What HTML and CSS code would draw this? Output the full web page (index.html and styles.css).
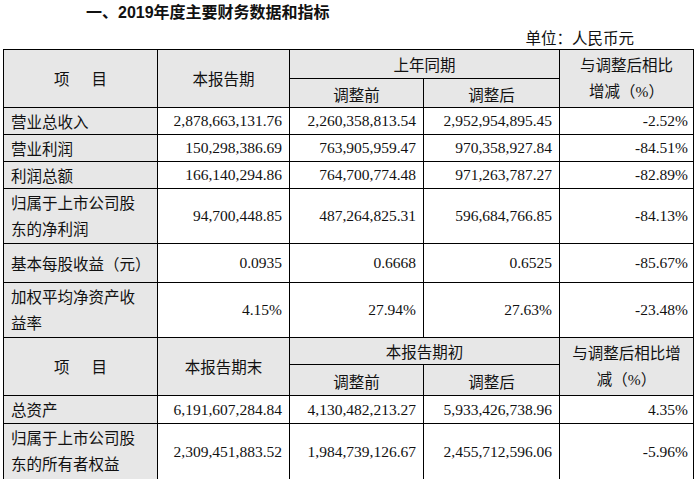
FILE: index.html
```html
<!DOCTYPE html>
<html lang="zh-CN">
<head>
<meta charset="utf-8">
<link rel="stylesheet" href="styles.css">
</head>
<body>
<h1 class="title">一、2019年度主要财务数据和指标</h1>
<div class="unit">单位：人民币元</div>
<table class="fin">
  <colgroup>
    <col class="c1"><col class="c2"><col class="c3"><col class="c4"><col class="c5">
  </colgroup>
  <tr class="h1">
    <td class="hd" rowspan="2">项<span class="sp"></span>目</td>
    <td class="hd" rowspan="2">本报告期</td>
    <td class="hd" colspan="2">上年同期</td>
    <td class="hd lh" rowspan="2">与调整后相比<br>增减（%）</td>
  </tr>
  <tr class="h2">
    <td class="hd sub">调整前</td>
    <td class="hd sub">调整后</td>
  </tr>
  <tr class="r1">
    <td class="lbl">营业总收入</td>
    <td class="num">2,878,663,131.76</td>
    <td class="num">2,260,358,813.54</td>
    <td class="num">2,952,954,895.45</td>
    <td class="pct">-2.52%</td>
  </tr>
  <tr class="r1">
    <td class="lbl">营业利润</td>
    <td class="num">150,298,386.69</td>
    <td class="num">763,905,959.47</td>
    <td class="num">970,358,927.84</td>
    <td class="pct">-84.51%</td>
  </tr>
  <tr class="r1">
    <td class="lbl">利润总额</td>
    <td class="num">166,140,294.86</td>
    <td class="num">764,700,774.48</td>
    <td class="num">971,263,787.27</td>
    <td class="pct">-82.89%</td>
  </tr>
  <tr class="r2">
    <td class="lbl lh">归属于上市公司股<br>东的净利润</td>
    <td class="num">94,700,448.85</td>
    <td class="num">487,264,825.31</td>
    <td class="num">596,684,766.85</td>
    <td class="pct">-84.13%</td>
  </tr>
  <tr class="r3">
    <td class="lbl">基本每股收益（元）</td>
    <td class="num">0.0935</td>
    <td class="num">0.6668</td>
    <td class="num">0.6525</td>
    <td class="pct">-85.67%</td>
  </tr>
  <tr class="r2">
    <td class="lbl lh">加权平均净资产收<br>益率</td>
    <td class="num">4.15%</td>
    <td class="num">27.94%</td>
    <td class="num">27.63%</td>
    <td class="pct">-23.48%</td>
  </tr>
  <tr class="h3">
    <td class="hd" rowspan="2">项<span class="sp"></span>目</td>
    <td class="hd" rowspan="2">本报告期末</td>
    <td class="hd" colspan="2">本报告期初</td>
    <td class="hd lh" rowspan="2">与调整后相比增<br>减（%）</td>
  </tr>
  <tr class="h4">
    <td class="hd sub">调整前</td>
    <td class="hd sub">调整后</td>
  </tr>
  <tr class="r5">
    <td class="lbl">总资产</td>
    <td class="num">6,191,607,284.84</td>
    <td class="num">4,130,482,213.27</td>
    <td class="num">5,933,426,738.96</td>
    <td class="pct">4.35%</td>
  </tr>
  <tr class="r4">
    <td class="lbl lh">归属于上市公司股<br>东的所有者权益</td>
    <td class="num">2,309,451,883.52</td>
    <td class="num">1,984,739,126.67</td>
    <td class="num">2,455,712,596.06</td>
    <td class="pct">-5.96%</td>
  </tr>
</table>
</body>
</html>
```

FILE: styles.css
```css
html, body {
  margin: 0;
  padding: 0;
  background: #ffffff;
}

body {
  font-family: "Liberation Serif", "Noto Sans CJK SC", serif;
  color: #111;
}

.title {
  margin: 0;
  padding: 3px 0 0 86px;
  height: 22px;
  font-family: "Liberation Sans", "Noto Sans CJK SC", sans-serif;
  font-weight: 700;
  font-size: 16px;
  line-height: 20px;
}

.unit {
  text-align: right;
  padding-right: 63px;
  height: 24px;
  font-size: 15.5px;
  line-height: 24px;
  font-family: "Noto Sans CJK SC", sans-serif;
}

.fin {
  margin-left: 3px;
  border-collapse: collapse;
  table-layout: fixed;
  width: 691px;
  font-size: 15.5px;
}

.c1 { width: 154px; }
.c2 { width: 132px; }
.c3 { width: 134px; }
.c4 { width: 136px; }
.c5 { width: 134px; }

.fin td {
  border: 1px solid #000;
  padding: 0;
  line-height: 20px;
  white-space: nowrap;
}

.hd {
  background: #e7e7e7;
  text-align: center;
  padding-top: 3px !important;
}

.sub {
  padding-top: 6px !important;
}

.lbl {
  background: #e7e7e7;
  text-align: left;
  padding-left: 7px !important;
  padding-top: 3px !important;
}

.fin td.lh {
  line-height: 26px;
  padding-top: 1px !important;
}

.num {
  text-align: right;
  padding-right: 7px !important;
}

.pct {
  text-align: right;
  padding-right: 5px !important;
}

.sp {
  display: inline-block;
  width: 22px;
}

.h1 { height: 29px; }
.h2 { height: 29px; }
.r1 { height: 27px; }
.r2 { height: 55px; }
.r3 { height: 39px; }
.h3 { height: 27px; }
.h4 { height: 31px; }
.r5 { height: 28px; }
.r4 { height: 56px; }
```
